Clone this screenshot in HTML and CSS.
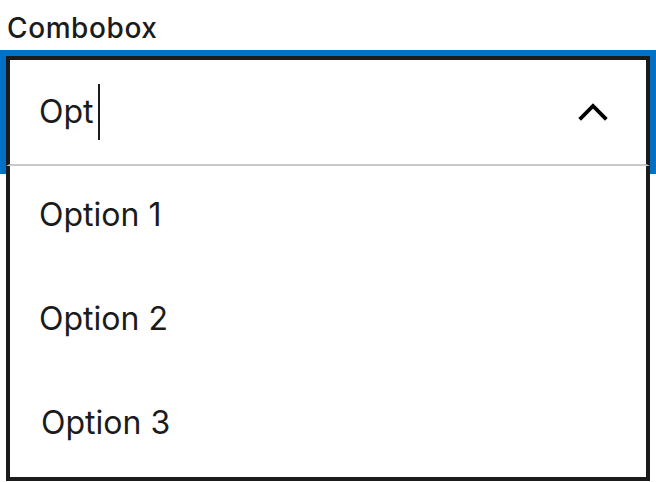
FILE: index.html
```html
<!DOCTYPE html>
<html lang="en">
<head>
<meta charset="utf-8">
<title>Combobox</title>
<link rel="stylesheet" href="styles.css">
</head>
<body>
<div class="field">
  <label class="label" for="cb">Combobox</label>
  <div class="combo">
    <div class="control">
      <span class="value" id="cb">Opt</span><span class="caret"></span>
      <svg class="chevron" width="30" height="20" viewBox="0 0 30 20" aria-hidden="true">
        <polyline points="3,16 15,4 27,16" fill="none" stroke="#000" stroke-width="3.8" stroke-linecap="square"/>
      </svg>
    </div>
    <ul class="listbox">
      <li class="option">Option 1</li>
      <li class="option">Option 2</li>
      <li class="option option-last">Option 3</li>
    </ul>
  </div>
</div>
</body>
</html>
```
FILE: styles.css
```css
html, body {
  margin: 0;
  padding: 0;
  background: #ffffff;
}
body {
  font-family: Inter, "Noto Sans", sans-serif;
  color: #1b1b1b;
  width: 656px;
  height: 482px;
  overflow: hidden;
}
.label {
  display: block;
  box-sizing: border-box;
  height: 50px;
  padding: 9px 0 0 7px;
  font-size: 28px;
  font-weight: 500;
  letter-spacing: 0.6px;
  line-height: 38px;
}
.combo {
  position: relative;
  margin: 6px 6px 0 6px;
}
.control {
  display: flex;
  align-items: center;
  height: 104px;
  border: 4px solid #1b1b1b;
  border-bottom: 2px solid #c9c9c9;
  background: #fff;
  padding: 0 38px 0 29px;
  box-shadow: 0 0 0 6px #0071c5, 0 2px 0 6px #0071c5;
}
.value {
  font-size: 32px;
  line-height: 102px;
}
.caret {
  display: block;
  width: 2px;
  height: 56px;
  margin-left: 4px;
  background: #1b1b1b;
}
.chevron {
  margin-left: auto;
  display: block;
}
.listbox {
  position: absolute;
  top: 100%;
  left: 0;
  right: 0;
  margin: 0;
  padding: 0;
  list-style: none;
  background: #fff;
  border: 4px solid #1b1b1b;
  border-top: 0;
}
.option {
  height: 104px;
  padding-left: 29px;
  font-size: 32px;
  line-height: 97px;
}
.option-last {
  height: 103px;
  padding-left: 31px;
}
```
